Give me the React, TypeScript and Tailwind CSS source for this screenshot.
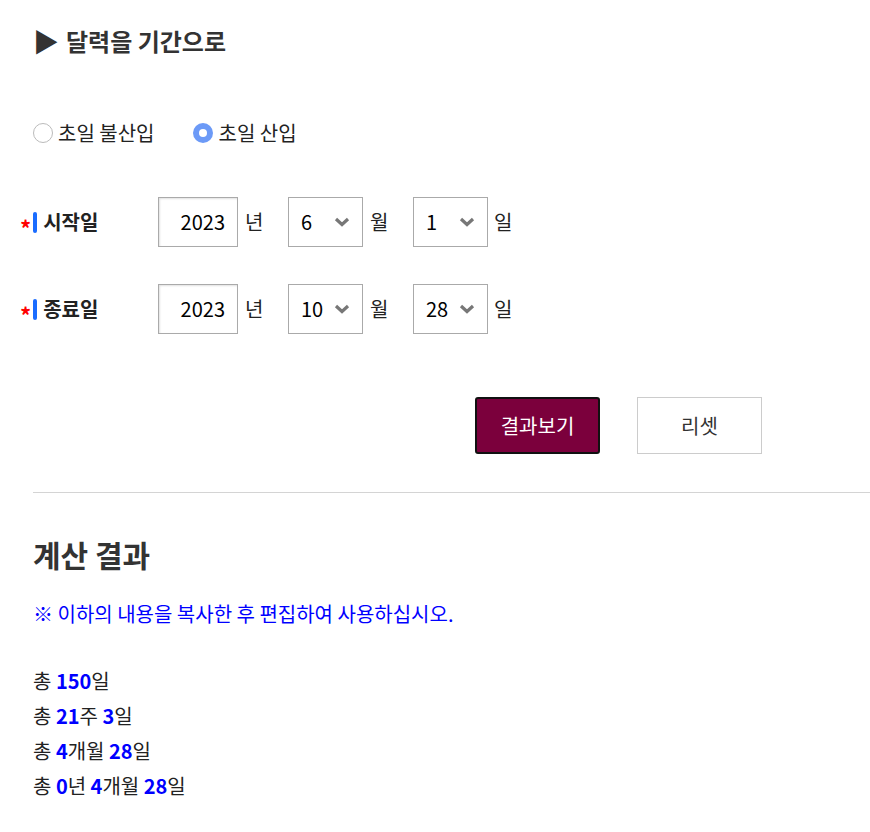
import { FC } from 'react';

const font = { fontFamily: '"Noto Sans CJK KR", "Noto Sans", sans-serif' };

const Chevron: FC = () => (
  <svg width="16" height="10" viewBox="0 0 16 10" className="text-[#777]">
    <path d="M2 2 L8 7.5 L14 2" fill="none" stroke="currentColor" strokeWidth="3.2" />
  </svg>
);

const SelectBox: FC<{ value: string }> = ({ value }) => (
  <div className="w-[75px] h-[50px] border border-[#aaa] flex items-center justify-between pl-[12px] pr-[12px] text-[20px] text-black">
    <span>{value}</span>
    <Chevron />
  </div>
);

const DateRow: FC<{ label: string; year: string; month: string; day: string }> = ({ label, year, month, day }) => (
  <div className="flex items-center h-[50px]">
    <div className="w-[158px] flex items-center pl-[20px]">
      <span className="text-[#ff0000] text-[22px] font-bold leading-none mt-[9px] mr-[2px]">*</span>
      <span className="w-[4px] h-[21px] bg-[#1a6cff] rounded-full mr-[6px]" />
      <span className="text-[20px] font-bold text-[#222]">{label}</span>
    </div>
    <div className="w-[80px] h-[50px] border border-[#aaa] shadow-[inset_1px_1px_2px_rgba(0,0,0,0.12)] flex items-center justify-end pr-[12px] text-[20px] text-black">
      {year}
    </div>
    <span className="ml-[7px] w-[43px] text-[20px] text-[#222]">년</span>
    <SelectBox value={month} />
    <span className="ml-[7px] w-[43px] text-[20px] text-[#222]">월</span>
    <SelectBox value={day} />
    <span className="ml-[6px] text-[20px] text-[#222]">일</span>
  </div>
);

const Num: FC<{ children: string }> = ({ children }) => <b className="text-[#0000ff] font-bold">{children}</b>;

export default function App() {
  return (
    <div className="w-[870px] min-h-[832px] bg-white" style={font}>
      <div className="pt-[23px] pl-[35px]">
        <h2 className="text-[24px] font-bold text-[#333] leading-[36px] flex items-center">
          <span className="mr-[7px] text-[#333] text-[26px] -ml-[2px]">▶</span>달력을 기간으로
        </h2>
      </div>

      <div className="mt-[59px] pl-[33px] flex items-center text-[20px] text-[#222] h-[30px]">
        <label className="flex items-center">
          <span className="w-[20px] h-[20px] rounded-full border border-[#bbb] bg-white mr-[5px]" />
          초일 불산입
        </label>
        <label className="flex items-center ml-[39px]">
          <span className="w-[20px] h-[20px] rounded-full bg-[#6c9af7] flex items-center justify-center mr-[5px]">
            <span className="w-[8px] h-[8px] rounded-full bg-white" />
          </span>
          초일 산입
        </label>
      </div>

      <div className="mt-[49px] flex flex-col gap-[37px]">
        <DateRow label="시작일" year="2023" month="6" day="1" />
        <DateRow label="종료일" year="2023" month="10" day="28" />
      </div>

      <div className="mt-[63px] flex pl-[475px] gap-[37px]">
        <button className="w-[125px] h-[57px] bg-[#7b003c] border-2 border-[#111] rounded-[3px] text-white text-[20px]">
          결과보기
        </button>
        <button className="w-[125px] h-[57px] bg-white border border-[#ccc] text-[#333] text-[20px]">
          리셋
        </button>
      </div>

      <div className="mt-[38px] ml-[33px] border-t border-[#d4d4d4]" />

      <div className="pl-[33px]">
        <h3 className="mt-[41px] text-[30px] font-bold text-[#333] leading-[40px]">계산 결과</h3>
        <p className="mt-[25px] text-[20px] text-[#0000ff] leading-[30px]">※ 이하의 내용을 복사한 후 편집하여 사용하십시오.</p>
        <div className="mt-[34px] text-[20px] text-[#222] leading-[35px]">
          <div>총 <Num>150</Num>일</div>
          <div>총 <Num>21</Num>주 <Num>3</Num>일</div>
          <div>총 <Num>4</Num>개월 <Num>28</Num>일</div>
          <div>총 <Num>0</Num>년 <Num>4</Num>개월 <Num>28</Num>일</div>
        </div>
      </div>
    </div>
  );
}
